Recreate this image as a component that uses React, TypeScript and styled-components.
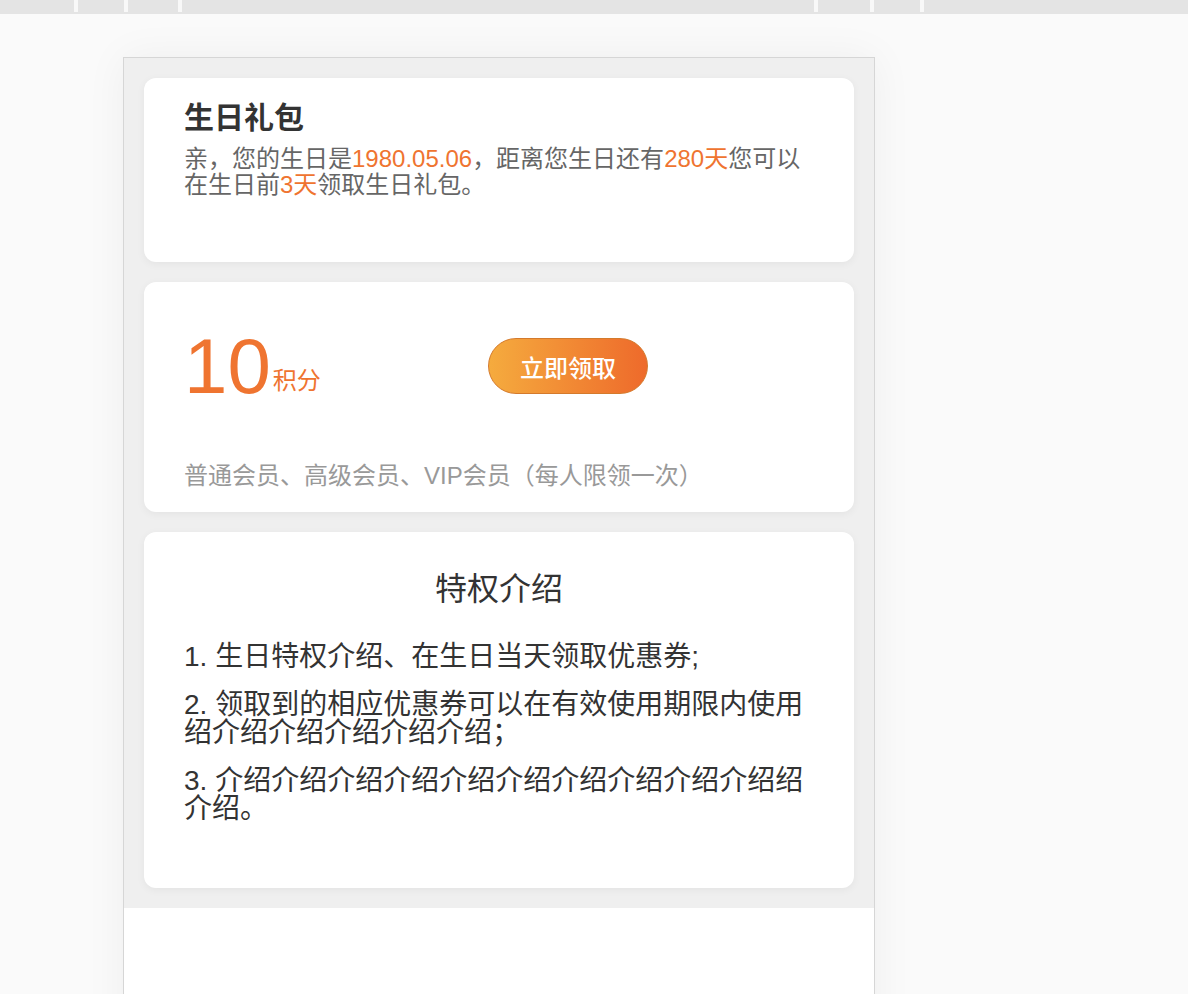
import React from "react";
import styled, { createGlobalStyle } from "styled-components";

const GlobalStyle = createGlobalStyle`
  html, body {
    margin: 0;
    padding: 0;
    background: #fafafa;
    font-family: "Liberation Sans", "Noto Sans CJK SC", sans-serif;
  }
  * { box-sizing: border-box; }
`;

const Page = styled.div`
  height: 100vh;
  overflow: hidden;
  display: flex;
  flex-direction: column;
`;

const TopBar = styled.div`
  height: 14px;
  background: #e4e4e4;
  display: flex;
  align-items: flex-start;
  flex-shrink: 0;
`;

const Tick = styled.span<{ $offset: number }>`
  display: block;
  width: 4px;
  height: 12px;
  background: #f8f8f8;
  margin-left: ${(p) => p.$offset}px;
`;

const Stage = styled.div`
  flex: 1;
  padding: 43px 0 0 123px;
`;

const Phone = styled.div`
  width: 752px;
  height: 1100px;
  border: 1px solid #d6d6d6;
  background: #ffffff;
  box-shadow: 0 0 40px rgba(0, 0, 0, 0.05);
  display: flex;
  flex-direction: column;
`;

const Content = styled.div`
  background: #efefef;
  padding: 20px;
  display: flex;
  flex-direction: column;
  gap: 20px;
`;

const Card = styled.div<{ $height?: number }>`
  background: #ffffff;
  border-radius: 12px;
  box-shadow: 0 2px 8px rgba(0, 0, 0, 0.05);
  ${(p) => (p.$height ? `height: ${p.$height}px;` : "")}
`;

const GiftCard = styled(Card)`
  padding: 25px 40px 0 40px;
`;

const GiftTitle = styled.h2`
  margin: 0 0 13px 0;
  font-size: 30px;
  line-height: 30px;
  font-weight: 700;
  color: #333333;
`;

const GiftText = styled.p`
  margin: 0;
  font-size: 24px;
  line-height: 26px;
  color: #666666;
`;

const Accent = styled.span`
  color: #ef7430;
`;

const PointsCard = styled(Card)`
  padding: 45px 40px 24px 40px;
`;

const PointsRow = styled.div`
  display: flex;
  align-items: center;
`;

const Amount = styled.div`
  width: 304px;
  color: #ef7430;
  white-space: nowrap;
`;

const AmountNumber = styled.span`
  font-size: 78px;
  line-height: 78px;
`;

const AmountUnit = styled.span`
  font-size: 24px;
  line-height: 24px;
  vertical-align: 4px;
  margin-left: 2px;
`;

const ClaimButton = styled.button`
  width: 160px;
  height: 56px;
  border-radius: 28px;
  border: 1px solid #d47a2c;
  background: linear-gradient(90deg, #f5ab3e 0%, #ee6a2b 100%);
  color: #ffffff;
  font-family: "Liberation Sans", "Noto Sans CJK SC", sans-serif;
  font-size: 24px;
  font-weight: 500;
  padding: 0;
  cursor: pointer;
`;

const PointsNote = styled.p`
  margin: 59px 0 0 0;
  font-size: 24px;
  line-height: 24px;
  color: #999999;
`;

const IntroCard = styled(Card)`
  padding: 41px 40px 65px 40px;
`;

const IntroTitle = styled.h3`
  margin: 0 0 38px 0;
  text-align: center;
  font-size: 32px;
  line-height: 32px;
  font-weight: 400;
  color: #333333;
`;

const IntroList = styled.div`
  display: flex;
  flex-direction: column;
  gap: 20px;
`;

const IntroItem = styled.p`
  margin: 0;
  font-size: 28px;
  line-height: 28px;
  color: #333333;
`;

const ticksLeft = [74, 46, 50];
const ticksRight = [814 - 182, 52, 46];

export default function App() {
  return (
    <>
      <GlobalStyle />
      <Page>
        <TopBar>
          {ticksLeft.map((o, i) => (
            <Tick key={`l${i}`} $offset={o} />
          ))}
          {ticksRight.map((o, i) => (
            <Tick key={`r${i}`} $offset={o} />
          ))}
        </TopBar>
        <Stage>
          <Phone>
            <Content>
              <GiftCard $height={184}>
                <GiftTitle>生日礼包</GiftTitle>
                <GiftText>
                  亲，您的生日是<Accent>1980.05.06</Accent>，距离您生日还有
                  <Accent>280天</Accent>您可以在生日前<Accent>3天</Accent>
                  领取生日礼包。
                </GiftText>
              </GiftCard>
              <PointsCard>
                <PointsRow>
                  <Amount>
                    <AmountNumber>10</AmountNumber>
                    <AmountUnit>积分</AmountUnit>
                  </Amount>
                  <ClaimButton>立即领取</ClaimButton>
                </PointsRow>
                <PointsNote>普通会员、高级会员、VIP会员（每人限领一次）</PointsNote>
              </PointsCard>
              <IntroCard>
                <IntroTitle>特权介绍</IntroTitle>
                <IntroList>
                  <IntroItem>1. 生日特权介绍、在生日当天领取优惠券;</IntroItem>
                  <IntroItem>
                    2. 领取到的相应优惠券可以在有效使用期限内使用绍介绍介绍介绍介绍介绍；
                  </IntroItem>
                  <IntroItem>
                    3. 介绍介绍介绍介绍介绍介绍介绍介绍介绍介绍绍介绍。
                  </IntroItem>
                </IntroList>
              </IntroCard>
            </Content>
          </Phone>
        </Stage>
      </Page>
    </>
  );
}
